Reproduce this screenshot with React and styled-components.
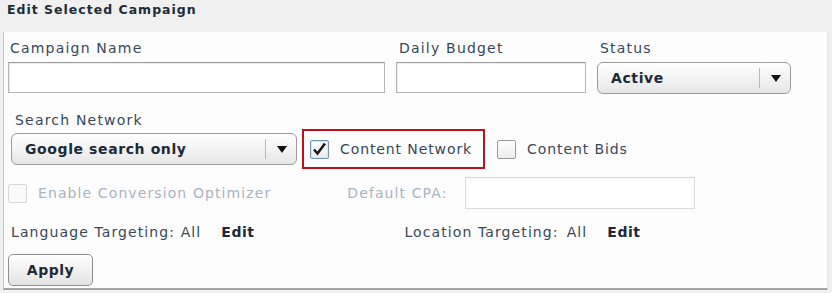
import styled, { createGlobalStyle } from "styled-components";

const GlobalStyle = createGlobalStyle`
  html, body {
    margin: 0;
    padding: 0;
    background: #f0f0f0;
  }
  body {
    font-family: "DejaVu Sans", Verdana, sans-serif;
  }
`;

const Page = styled.div`
  width: 832px;
  height: 293px;
  background: #f0f0f0;
  box-sizing: border-box;
  overflow: hidden;
`;

const Title = styled.h1`
  margin: 0;
  height: 32px;
  box-sizing: border-box;
  padding: 2px 0 0 7px;
  font-size: 12.5px;
  font-weight: bold;
  letter-spacing: 1px;
  line-height: 16px;
  color: #1e2b38;
`;

const Panel = styled.div`
  margin: 0 4px 0 3px;
  height: 258px;
  box-sizing: border-box;
  background: #fdfdfd;
  border-left: 1px solid #c4c4c4;
  border-right: 1px solid #e4e4e4;
  border-bottom: 2px solid #a4a4a4;
  padding: 8px 0 0 0;
`;

const Row = styled.div`
  display: flex;
  align-items: ${(p) => p.$align || "center"};
  gap: ${(p) => p.$gap || 0}px;
  margin-top: ${(p) => p.$top || 0}px;
  margin-left: ${(p) => p.$left || 0}px;
`;

const Field = styled.div`
  display: flex;
  flex-direction: column;
  width: ${(p) => p.$width}px;
  margin-left: ${(p) => p.$left || 0}px;
`;

const Label = styled.label`
  display: block;
  font-size: 14px;
  letter-spacing: 1.2px;
  line-height: 17px;
  color: #37475a;
  margin: 0 0 5px ${(p) => p.$indent || 0}px;
`;

const TextInput = styled.input`
  box-sizing: border-box;
  width: 100%;
  height: ${(p) => p.$height || 31}px;
  border: 1px solid ${(p) => (p.disabled ? "#dcdcdc" : "#b4b4b4")};
  border-top-color: ${(p) => (p.disabled ? "#d4d4d4" : "#9c9c9c")};
  background: #fff;
  outline: none;
  box-shadow: ${(p) => (p.disabled ? "none" : "inset 1px 1px 1px rgba(0,0,0,0.08)")};
`;

const Select = styled.div`
  position: relative;
  box-sizing: border-box;
  width: ${(p) => p.$width || "100%"};
  height: 32px;
  border: 1px solid #9a9a9a;
  border-radius: 6px;
  background: linear-gradient(#ffffff, #f2f2f2 55%, #e6e6e6);
  display: flex;
  align-items: center;
  padding-left: 13px;
  font-size: 14px;
  font-weight: bold;
  letter-spacing: 0.6px;
  color: #1c2a38;
`;

const SelectArrow = styled.span`
  position: absolute;
  right: 0;
  top: 5px;
  bottom: 5px;
  width: 30px;
  border-left: 1px solid #b8b8b8;
  display: flex;
  align-items: center;
  justify-content: center;
  &::after {
    content: "";
    border-left: 5px solid transparent;
    border-right: 5px solid transparent;
    border-top: 7px solid #111;
    margin-left: 1px;
  }
`;

const Highlight = styled.div`
  box-sizing: border-box;
  height: 40px;
  display: flex;
  align-items: center;
  gap: 11px;
  padding: 0 11px 0 6px;
  border: 2px solid #c0101a;
`;

const CheckGroup = styled.div`
  display: flex;
  align-items: center;
  gap: ${(p) => p.$gap || 11}px;
  margin-left: ${(p) => p.$left || 0}px;
`;

const Box = styled.span`
  box-sizing: border-box;
  width: 19px;
  height: 19px;
  border: 1px solid ${(p) => (p.$checked ? "#6f95b8" : p.$disabled ? "#d8d8d8" : "#9a9a9a")};
  border-radius: 2px;
  background: ${(p) =>
    p.$disabled ? "#fafafa" : "linear-gradient(#ffffff, #ececec)"};
  box-shadow: inset 0 0 0 1px ${(p) => (p.$checked ? "#d6e6f4" : "transparent")};
  display: flex;
  align-items: center;
  justify-content: center;
`;

const CheckText = styled.span`
  font-size: 14px;
  letter-spacing: ${(p) => (p.$disabled ? 1.1 : 0.9)}px;
  color: ${(p) => (p.$disabled ? "#aab3bc" : "#37475a")};
`;

const Text = styled.span`
  font-size: 14px;
  letter-spacing: ${(p) => (p.$bold ? 0.5 : 1.1)}px;
  font-weight: ${(p) => (p.$bold ? "bold" : "normal")};
  color: ${(p) => (p.$disabled ? "#aab3bc" : p.$bold ? "#1c2a38" : "#37475a")};
  margin-left: ${(p) => p.$left || 0}px;
`;

const Button = styled.button`
  box-sizing: border-box;
  width: 85px;
  height: 32px;
  border: 1px solid #8e8e8e;
  border-radius: 5px;
  background: linear-gradient(#ffffff, #f0f0f0 55%, #e2e2e2);
  font-family: "DejaVu Sans", Verdana, sans-serif;
  font-size: 14px;
  font-weight: bold;
  letter-spacing: 0.5px;
  color: #1c2a38;
  padding: 0;
`;

const Check = () => (
  <svg width="15" height="14" viewBox="0 0 15 14">
    <path d="M2 7.5 L5.5 11.5 L13 1.5" fill="none" stroke="#1a1a1a" strokeWidth="2.6" />
  </svg>
);

export default function App() {
  return (
    <Page>
      <GlobalStyle />
      <Title>Edit Selected Campaign</Title>
      <Panel>
        <Row $align="flex-start" $gap={11} $left={4}>
          <Field $width={377}>
            <Label $indent={2}>Campaign Name</Label>
            <TextInput />
          </Field>
          <Field $width={190}>
            <Label $indent={3}>Daily Budget</Label>
            <TextInput />
          </Field>
          <Field $width={194}>
            <Label $indent={3}>Status</Label>
            <Select>
              Active
              <SelectArrow />
            </Select>
          </Field>
        </Row>

        <Row $top={18} $left={11}>
          <Label>Search Network</Label>
        </Row>
        <Row $gap={5} $left={7} $top={-5}>
          <Select $width="286px">
            Google search only
            <SelectArrow />
          </Select>
          <Highlight>
            <Box $checked>
              <Check />
            </Box>
            <CheckText>Content Network</CheckText>
          </Highlight>
          <CheckGroup $left={7}>
            <Box />
            <CheckText>Content Bids</CheckText>
          </CheckGroup>
        </Row>

        <Row $top={8} $left={4}>
          <CheckGroup>
            <Box $disabled />
            <CheckText $disabled>Enable Conversion Optimizer</CheckText>
          </CheckGroup>
          <Text $disabled $left={76}>Default CPA:</Text>
          <Field $width={230} $left={17}>
            <TextInput disabled $height={32} />
          </Field>
        </Row>

        <Row $top={15} $left={7}>
          <Text>Language Targeting: All</Text>
          <Text $bold $left={20}>Edit</Text>
          <Text $left={150}>Location Targeting:</Text>
          <Text $left={8}>All</Text>
          <Text $bold $left={20}>Edit</Text>
        </Row>

        <Row $top={14} $left={4}>
          <Button>Apply</Button>
        </Row>
      </Panel>
    </Page>
  );
}
